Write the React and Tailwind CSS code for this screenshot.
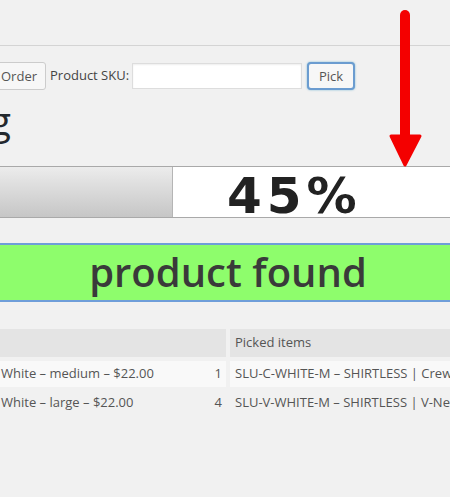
export default function App() {
  return (
    <div
      className="relative w-[450px] h-[497px] overflow-hidden bg-[#f1f1f1] text-[13px] text-[#444]"
      style={{ fontFamily: '"Open Sans", "Liberation Sans", sans-serif' }}
    >
      {/* top rule */}
      <div className="h-[46px] border-b border-[#d4d4d4]" />

      {/* toolbar */}
      <div className="flex items-center h-[28px] mt-[16px]">
        <button className="h-[28px] -ml-[6px] pl-[6px] pr-[8px] border border-[#cccccc] rounded-[3px] bg-[#f7f7f7] text-[#555] leading-none">
          Order
        </button>
        <span className="ml-[4px] text-[#444]">Product SKU:</span>
        <input
          type="text"
          className="ml-[3px] w-[170px] h-[26px] bg-white border border-[#dddddd] shadow-[inset_0_1px_2px_rgba(0,0,0,0.07)] outline-none"
        />
        <button className="ml-[5px] w-[48px] h-[28px] border-2 border-[#6b9cd0] rounded-[4px] bg-[#f7f7f7] text-[#555] leading-none shadow-[0_0_2px_rgba(30,140,190,0.6)]">
          Pick
        </button>
      </div>

      {/* heading, clipped to the final letter */}
      <div className="flex justify-end w-[11px] overflow-hidden whitespace-nowrap mt-[4px] h-[52px]">
        <h1 className="text-[39px] leading-[52px] text-[#23282d] font-normal">Picking</h1>
      </div>

      {/* progress bar */}
      <div className="flex h-[52px] mt-[20px] border-y border-[#a9a9a9]">
        <div className="w-[173px] border-r border-[#b5b5b5] bg-gradient-to-b from-[#ececec] to-[#c6c6c6]" />
        <div className="flex-1 bg-white flex items-center pl-[54px]">
          <span
            className="text-[50px] font-bold text-[#222] tracking-[5px] leading-none mt-[8px]"
            style={{ fontFamily: '"DejaVu Sans", Verdana, sans-serif' }}
          >
            45%
          </span>
        </div>
      </div>

      {/* status box */}
      <div className="mt-[25px] h-[59px] border-y-2 border-[#6f9ed9] bg-[#8efd6c] flex items-center justify-center">
        <span className="text-[40px] font-semibold leading-none text-[#3a3a3a] -mt-[2px] ml-[6px]">product found</span>
      </div>

      {/* table */}
      <div className="mt-[27px] grid grid-cols-[226px_1fr] gap-x-[4px] gap-y-[4px]">
        <div className="h-[28px] bg-[#e4e4e4]" />
        <div className="h-[28px] bg-[#e4e4e4] flex items-center pl-[5px] text-[#555]">Picked items</div>

        <div className="h-[26px] bg-[#f9f9f9] flex items-center justify-between pl-[1px] pr-[4px] text-[#555] whitespace-nowrap">
          <span>White – medium – $22.00</span>
          <span>1</span>
        </div>
        <div className="h-[26px] bg-[#f9f9f9] flex items-center pl-[5px] text-[#555] whitespace-nowrap overflow-hidden">
          SLU-C-WHITE-M – SHIRTLESS | Crew
        </div>

        <div className="h-[24px] flex items-center justify-between pl-[1px] pr-[4px] text-[#555] whitespace-nowrap">
          <span>White – large – $22.00</span>
          <span>4</span>
        </div>
        <div className="h-[24px] flex items-center pl-[5px] text-[#555] whitespace-nowrap overflow-hidden">
          SLU-V-WHITE-M – SHIRTLESS | V-Ne
        </div>
      </div>

      {/* red annotation arrow */}
      <svg className="absolute left-[388px] top-[6px]" width="36" height="162" viewBox="0 0 36 162">
        <line x1="17" y1="9" x2="17" y2="134" stroke="#f40000" strokeWidth="10" strokeLinecap="round" />
        <polygon points="3,130 32,130 17,159" fill="#f40000" stroke="#f40000" strokeWidth="3" strokeLinejoin="round" />
      </svg>
    </div>
  )
}
